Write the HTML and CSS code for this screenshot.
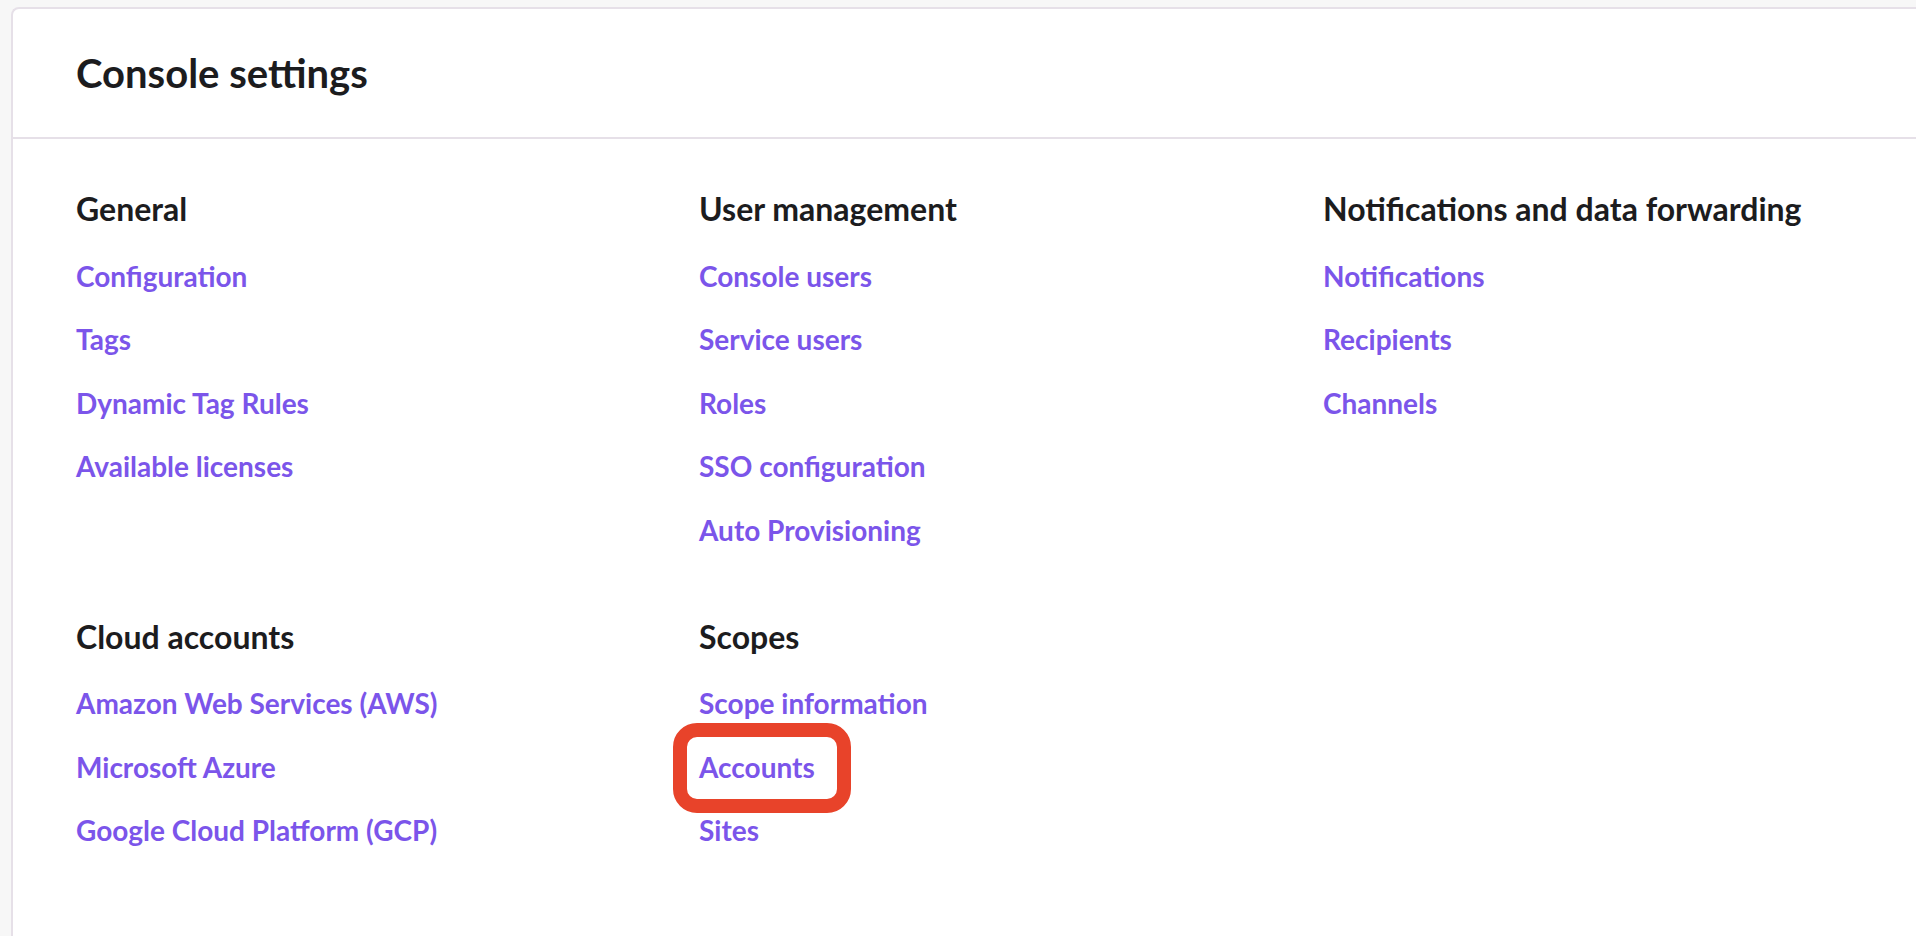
FILE: index.html
```html
<!DOCTYPE html>
<html lang="en">
<head>
<meta charset="utf-8">
<title>Console settings</title>
<link rel="stylesheet" href="styles.css">
</head>
<body>
<div class="card">
  <header class="card-header">
    <h1 class="title">Console settings</h1>
  </header>
  <main class="card-body">
    <section class="group">
      <h2 class="group-title">General</h2>
      <ul class="links">
        <li><a class="link" href="#">Configuration</a></li>
        <li><a class="link" href="#">Tags</a></li>
        <li><a class="link" href="#">Dynamic Tag Rules</a></li>
        <li><a class="link" href="#">Available licenses</a></li>
      </ul>
    </section>
    <section class="group">
      <h2 class="group-title">User management</h2>
      <ul class="links">
        <li><a class="link" href="#">Console users</a></li>
        <li><a class="link" href="#">Service users</a></li>
        <li><a class="link" href="#">Roles</a></li>
        <li><a class="link" href="#">SSO configuration</a></li>
        <li><a class="link" href="#">Auto Provisioning</a></li>
      </ul>
    </section>
    <section class="group">
      <h2 class="group-title">Notifications and data forwarding</h2>
      <ul class="links">
        <li><a class="link" href="#">Notifications</a></li>
        <li><a class="link" href="#">Recipients</a></li>
        <li><a class="link" href="#">Channels</a></li>
      </ul>
    </section>
    <section class="group">
      <h2 class="group-title">Cloud accounts</h2>
      <ul class="links">
        <li><a class="link" href="#">Amazon Web Services (AWS)</a></li>
        <li><a class="link" href="#">Microsoft Azure</a></li>
        <li><a class="link" href="#">Google Cloud Platform (GCP)</a></li>
      </ul>
    </section>
    <section class="group">
      <h2 class="group-title">Scopes</h2>
      <ul class="links">
        <li><a class="link" href="#">Scope information</a></li>
        <li><a class="link link-highlight" href="#">Accounts</a></li>
        <li><a class="link" href="#">Sites</a></li>
      </ul>
    </section>
  </main>
</div>
</body>
</html>
```

FILE: styles.css
```css
* { box-sizing: border-box; }

html, body {
  margin: 0;
  height: 100%;
}

body {
  background: #f7f7f7;
  font-family: Lato, "Liberation Sans", sans-serif;
  padding: 7px 0 0 11px;
  overflow: hidden;
}

.card {
  background: #ffffff;
  border-top: 2px solid #e6e0e8;
  border-left: 2px solid #e6e0e8;
  border-top-left-radius: 8px;
  min-height: 100%;
}

.card-header {
  height: 130px;
  padding: 40px 0 0 63px;
  border-bottom: 2px solid #e6e0e8;
}

.title {
  margin: 0;
  font-size: 40px;
  line-height: 48px;
  font-weight: 700;
  color: #1c1c1e;
}

.card-body {
  display: grid;
  grid-template-columns: 623px 624px 623px;
  row-gap: 67px;
  padding: 50px 0 0 63px;
}

.group-title {
  margin: 0 0 26.5px;
  font-size: 32px;
  line-height: 40px;
  font-weight: 700;
  color: #1c1c1e;
}

.links {
  list-style: none;
  margin: 0;
  padding: 0;
  display: flex;
  flex-direction: column;
  gap: 23.5px;
}

.links li {
  display: flex;
  height: 40px;
}

.link {
  position: relative;
  display: block;
  font-size: 28px;
  line-height: 40px;
  font-weight: 700;
  color: #7b55ea;
  text-decoration: none;
}

.link-highlight::after {
  content: "";
  position: absolute;
  top: -24px;
  left: -26px;
  right: -36px;
  bottom: -26px;
  border: 14px solid #e8432a;
  border-radius: 24px;
}
```
